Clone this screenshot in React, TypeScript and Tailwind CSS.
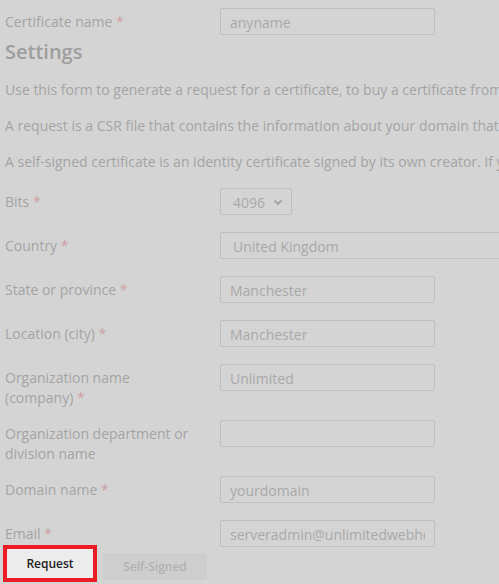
import { ReactNode } from 'react';

const Star = () => <span className="text-[#c9a2a2]"> *</span>;

const TextInput = ({ value, wide }: { value: string; wide?: boolean }) => (
  <div
    className={`h-[27px] ${wide ? 'w-[300px] pl-[12px]' : 'w-[215px] pl-[9px]'} pr-[9px] pt-[1px] shrink-0 border border-[#c0c0c0] rounded-[2px] bg-[#d4d4d4] flex items-center text-[14px] text-[#a9a9a9]`}
  >
    <span className="block overflow-hidden whitespace-nowrap">{value}</span>
  </div>
);

const Row = ({
  label,
  children,
  className = '',
}: {
  label: ReactNode;
  children: ReactNode;
  className?: string;
}) => (
  <div className={`flex items-start ${className}`}>
    <div className="w-[215px] shrink-0 pt-[4px] pr-4 leading-[20px] text-[14px] text-[#a4a4a4]">
      {label}
    </div>
    {children}
  </div>
);

export default function App() {
  return (
    <div
      className="w-[499px] h-[584px] overflow-hidden bg-[#d4d4d4] pt-[8px]"
      style={{ fontFamily: '"Open Sans", "Liberation Sans", sans-serif' }}
    >
      <div className="pl-[5px]">
        <Row label={<>Certificate name<Star /></>}>
          <TextInput value="anyname" />
        </Row>

        <h2 className="mt-[5px] text-[20px] leading-[24px] font-semibold text-[#9e9e9e]">
          Settings
        </h2>

        <div className="text-[14px] leading-[20px] text-[#a4a4a4] whitespace-nowrap">
          <p className="mt-[16px]">
            Use this form to generate a request for a certificate, to buy a certificate from a trusted authority.
          </p>
          <p className="mt-[16px]">
            A request is a CSR file that contains the information about your domain that is sent to the authority.
          </p>
          <p className="mt-[16px]">
            A self-signed certificate is an identity certificate signed by its own creator. If you do not need a trusted one.
          </p>
        </div>

        <Row className="mt-[16px]" label={<>Bits<Star /></>}>
          <div className="h-[27px] w-[72px] pt-[1px] border border-[#c0c0c0] rounded-[2px] flex items-center justify-between pl-[12px] pr-[8px] text-[14px] text-[#a9a9a9]">
            <span>4096</span>
            <svg width="10" height="7" viewBox="0 0 10 7" fill="none">
              <path d="M1.5 1.5 L5 5 L8.5 1.5" stroke="#a3a3a3" strokeWidth="1.8" />
            </svg>
          </div>
        </Row>

        <Row className="mt-[17px]" label={<>Country<Star /></>}>
          <TextInput value="United Kingdom" wide />
        </Row>

        <Row className="mt-[17px]" label={<>State or province<Star /></>}>
          <TextInput value="Manchester" />
        </Row>

        <Row className="mt-[17px]" label={<>Location (city)<Star /></>}>
          <TextInput value="Manchester" />
        </Row>

        <Row
          className="mt-[17px]"
          label={
            <>
              Organization name
              <br />
              (company)<Star />
            </>
          }
        >
          <TextInput value="Unlimited" />
        </Row>

        <Row
          className="mt-[12px]"
          label={
            <>
              Organization department or
              <br />
              division name
            </>
          }
        >
          <TextInput value="" />
        </Row>

        <Row className="mt-[12px]" label={<>Domain name<Star /></>}>
          <TextInput value="yourdomain" />
        </Row>

        <Row className="mt-[17px]" label={<>Email<Star /></>}>
          <TextInput value="serveradmin@unlimitedwebhosting.co.uk" />
        </Row>
      </div>

      <div className="relative -mt-[2px] pl-[3px] flex items-start gap-[6px]">
        <button className="h-[37px] w-[94px] border-[4px] border-[#ed1c24] bg-[#ececec] text-[12px] font-semibold text-[#222222]">
          Request
        </button>
        <button className="mt-[8px] h-[27px] w-[104px] rounded-[2px] bg-[#cecece] text-[12px] font-semibold text-[#b2b2b2]">
          Self-Signed
        </button>
      </div>
    </div>
  );
}
